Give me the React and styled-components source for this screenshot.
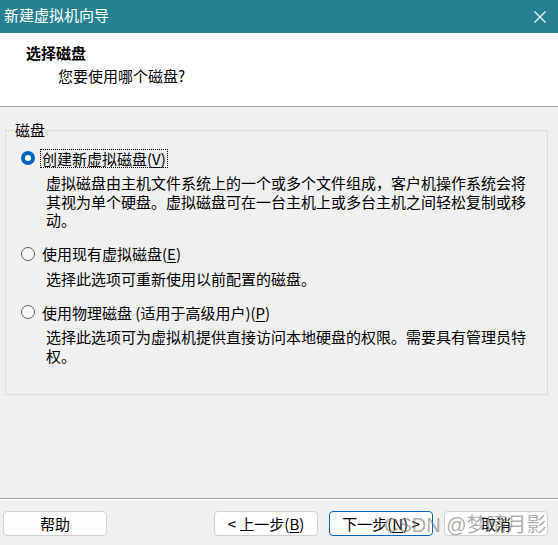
import React from "react";
import styled, { createGlobalStyle } from "styled-components";

const GlobalStyle = createGlobalStyle`
  html, body {
    margin: 0;
    padding: 0;
    background: #f0f0f0;
  }
  body {
    font-family: "Noto Sans CJK SC", "Noto Sans", sans-serif;
    font-size: 15px;
    color: #000000;
  }
`;

const Window = styled.div`
  position: relative;
  width: 558px;
  height: 545px;
  display: flex;
  flex-direction: column;
  background: #f0f0f0;
  overflow: hidden;
`;

const TitleBar = styled.div`
  height: 33px;
  flex: none;
  display: flex;
  align-items: center;
  justify-content: space-between;
  padding: 0 12px 3px 4px;
  background: #24818f;
  color: #ffffff;
  font-size: 15px;
  line-height: 20px;
  box-sizing: border-box;
`;

const CloseButton = styled.div`
  display: flex;
  align-items: center;
  justify-content: center;
  width: 12px;
  height: 12px;
  margin-top: 3px;
`;

const Header = styled.div`
  height: 74px;
  flex: none;
  box-sizing: border-box;
  background: #ffffff;
  border-bottom: 1px solid #a0a0a0;
  padding: 10px 0 0 26px;
`;

const HeaderTitle = styled.div`
  font-weight: bold;
  line-height: 20px;
`;

const HeaderSubtitle = styled.div`
  margin: 3px 0 0 32px;
  line-height: 20px;
`;

const Body = styled.div`
  flex: 1;
  padding: 14px 10px 0 5px;
`;

const GroupBox = styled.fieldset`
  margin: 0;
  padding: 0 0 29px 8px;
  border: 1px solid #dcdcdc;
  min-width: 0;
`;

const Legend = styled.legend`
  padding: 0 2px 0 1px;
  line-height: 18px;
  margin-left: 0;
`;

const Options = styled.div`
  display: flex;
  flex-direction: column;
  gap: 14px;
  padding-top: 9px;
`;

const Option = styled.div`
  display: flex;
  flex-direction: column;
`;

const OptionRow = styled.div`
  display: flex;
  align-items: center;
  height: 20px;
  padding-left: 7px;
`;

const Radio = styled.span`
  width: 14px;
  height: 14px;
  box-sizing: border-box;
  border-radius: 50%;
  flex: none;
  display: flex;
  align-items: center;
  justify-content: center;
  background: ${(p) => (p.$checked ? "#0067c0" : "#f6f6f6")};
  border: ${(p) => (p.$checked ? "none" : "1px solid #5f5f5f")};

  &::after {
    content: "";
    display: ${(p) => (p.$checked ? "block" : "none")};
    width: 6px;
    height: 6px;
    border-radius: 50%;
    background: #ffffff;
  }
`;

const OptionLabel = styled.span`
  margin-left: 5px;
  padding: 0 1px;
  line-height: 17px;
  border: 1px dotted ${(p) => (p.$focused ? "#000000" : "transparent")};
  white-space: nowrap;
`;

const Mnemonic = styled.u`
  text-underline-offset: 2px;
`;

const Description = styled.div`
  margin: 6px 0 0 32px;
  width: 486px;
  line-height: 18.5px;
`;

const Footer = styled.div`
  flex: none;
  height: 47px;
  box-sizing: border-box;
  border-top: 1px solid #a0a0a0;
  box-shadow: inset 0 1px 0 #ffffff;
  display: flex;
  align-items: flex-start;
  justify-content: space-between;
  padding: 12px 10px 0 3px;
`;

const ButtonGroup = styled.div`
  display: flex;
  gap: 11px;
`;

const Button = styled.button`
  width: 104px;
  height: 25px;
  box-sizing: border-box;
  background: #fdfdfd;
  border: 1px solid ${(p) => (p.$default ? "#0067c0" : "#d0d0d0")};
  border-radius: 4px;
  font-family: inherit;
  font-size: 15px;
  line-height: 20px;
  color: #000000;
  padding: 0;
  display: flex;
  align-items: center;
  justify-content: center;
`;

const Watermark = styled.div`
  position: absolute;
  z-index: 1;
  left: 384px;
  top: 512px;
  font-family: "Liberation Sans", "Noto Sans CJK SC", sans-serif;
  font-size: 20px;
  line-height: 26px;
  color: rgba(120, 120, 120, 0.6);
  pointer-events: none;
  white-space: nowrap;
`;

const options = [
  {
    label: "创建新虚拟磁盘",
    key: "V",
    checked: true,
    text: "虚拟磁盘由主机文件系统上的一个或多个文件组成，客户机操作系统会将其视为单个硬盘。虚拟磁盘可在一台主机上或多台主机之间轻松复制或移动。",
  },
  {
    label: "使用现有虚拟磁盘",
    key: "E",
    text: "选择此选项可重新使用以前配置的磁盘。",
  },
  {
    label: "使用物理磁盘 (适用于高级用户)",
    key: "P",
    text: "选择此选项可为虚拟机提供直接访问本地硬盘的权限。需要具有管理员特权。",
  },
];

export default function App() {
  return (
    <>
      <GlobalStyle />
      <Window>
        <TitleBar>
          <span>新建虚拟机向导</span>
          <CloseButton>
            <svg width="12" height="12" viewBox="0 0 12 12">
              <path d="M0.5 0.5 L11.5 11.5 M11.5 0.5 L0.5 11.5" stroke="#ffffff" strokeWidth="1.1" />
            </svg>
          </CloseButton>
        </TitleBar>
        <Header>
          <HeaderTitle>选择磁盘</HeaderTitle>
          <HeaderSubtitle>您要使用哪个磁盘?</HeaderSubtitle>
        </Header>
        <Body>
          <GroupBox>
            <Legend>磁盘</Legend>
            <Options>
              {options.map((o) => (
                <Option key={o.key}>
                  <OptionRow>
                    <Radio $checked={o.checked} />
                    <OptionLabel $focused={o.checked}>
                      {o.label}(<Mnemonic>{o.key}</Mnemonic>)
                    </OptionLabel>
                  </OptionRow>
                  <Description>{o.text}</Description>
                </Option>
              ))}
            </Options>
          </GroupBox>
        </Body>
        <Footer>
          <Button>帮助</Button>
          <ButtonGroup>
            <Button>
              &lt; 上一步(<Mnemonic>B</Mnemonic>)
            </Button>
            <Button $default>
              下一步(<Mnemonic>N</Mnemonic>) &gt;
            </Button>
            <Button>取消</Button>
          </ButtonGroup>
        </Footer>
        <Watermark>CSDN @梦晴月影</Watermark>
      </Window>
    </>
  );
}
